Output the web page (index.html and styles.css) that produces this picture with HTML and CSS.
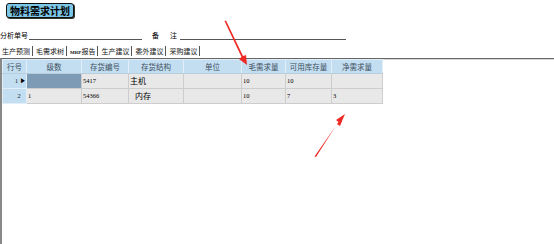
FILE: index.html
```html
<!DOCTYPE html>
<html lang="zh">
<head>
<meta charset="utf-8">
<link rel="stylesheet" href="styles.css">
</head>
<body>
<div class="page">
  <div class="title-row"><div class="title">物料需求计划</div></div>
  <div class="form-row">
    <span class="label">分析单号</span><span class="field f1"></span>
    <span class="label memo">备</span><span class="label memo2">注</span><span class="field f2"></span>
  </div>
  <div class="tabs">
    <span class="tab">生产预测</span><span class="tab">毛需求树</span><span class="tab active"><span class="mrp">MRP</span>报告</span><span class="tab">生产建议</span><span class="tab">委外建议</span><span class="tab">采购建议</span>
  </div>
  <div class="panel">
    <table class="grid">
      <colgroup>
        <col style="width:24px"><col style="width:55px"><col style="width:47px"><col style="width:55px"><col style="width:58px"><col style="width:44px"><col style="width:46px"><col style="width:51px">
      </colgroup>
      <thead>
        <tr><th>行号</th><th>级数</th><th>存货编号</th><th>存货结构</th><th>单位</th><th>毛需求量</th><th>可用库存量</th><th>净需求量</th></tr>
      </thead>
      <tbody>
        <tr><td class="rn">1 <span class="ptr">▶</span></td><td class="sel"></td><td class="num">5417</td><td class="name">主机</td><td></td><td class="num">10</td><td class="num">10</td><td></td></tr>
        <tr><td class="rn">2&nbsp;&nbsp;&nbsp;</td><td class="num">1</td><td class="num">54366</td><td class="name lvl2">内存</td><td></td><td class="num">10</td><td class="num">7</td><td class="num">3</td></tr>
      </tbody>
    </table>
  </div>
  <svg class="arrows" width="554" height="244" viewBox="0 0 554 244">
    <g fill="#ee2a24" stroke="none">
      <polygon points="224.5,21 226,20.5 243,56 246,55 247,65 239,59 241.5,57"/>
      <polygon points="314.5,156.5 316,157 337,124 340,126 345,114 336,120 338.5,122"/>
    </g>
  </svg>
</div>
</body>
</html>
```
FILE: styles.css
```css
html, body {
  margin: 0;
  padding: 0;
  background: #ffffff;
}
body {
  font-family: "Noto Sans CJK SC", "Noto Sans", sans-serif;
  color: #000;
  width: 554px;
  height: 244px;
  overflow: hidden;
  line-height: 1;
}
.page {
  position: relative;
  width: 554px;
  height: 244px;
}
.title-row {
  padding: 3px 0 0 6px;
  height: 16px;
  display: flex;
  align-items: flex-start;
}
.title {
  height: 13px;
  padding: 0 3px;
  background: #7cc6e6;
  border: 1px solid #111;
  border-radius: 3px;
  box-shadow: 1px 1px 0 #333;
  font-size: 10px;
  font-weight: bold;
  line-height: 13px;
}
.form-row {
  display: flex;
  align-items: flex-end;
  height: 21px;
  font-size: 7px;
  line-height: 8px;
}
.label {
  white-space: nowrap;
  padding-bottom: 1px;
}
.memo {
  margin-left: 10px;
  width: 18px;
}
.memo2 {
  width: 10px;
}
.field {
  display: block;
  border-bottom: 1px solid #555;
  height: 8px;
}
.f1 {
  width: 113px;
  margin-left: 1px;
}
.f2 {
  width: 166px;
}
.tabs {
  display: flex;
  margin-top: 6px;
  height: 10px;
  padding-left: 2px;
}
.tab {
  font-size: 7px;
  line-height: 10px;
  padding: 0 2px 0 0;
  border-right: 1px solid #555;
  margin-right: 3px;
  color: #111;
  white-space: nowrap;
}
.tab.active {
  background: #fff;
}
.mrp {
  font-family: "Liberation Serif", serif;
  font-size: 5px;
  font-weight: bold;
}
.panel {
  margin-top: 2px;
  height: 186px;
  border-top: 1px solid #666;
  border-left: 2px solid #888;
  box-shadow: inset 0 1px 0 #d8d8d8;
}
.grid {
  border-collapse: collapse;
  table-layout: fixed;
  width: 380px;
}
.grid th {
  height: 13px;
  background: #c3def1;
  border: 1px solid #e2eef8;
  border-bottom: 1px solid #b8cedd;
  font-size: 7.5px;
  font-weight: normal;
  color: #3f4f5e;
  padding: 0;
  line-height: 13px;
  text-align: center;
}
.grid td {
  height: 14px;
  background: #e8e8e8;
  border: 1px solid #cdcdcd;
  padding: 0 0 0 1px;
  font-size: 6.5px;
  font-family: "Liberation Serif", serif;
  color: #000;
  line-height: 14px;
  white-space: nowrap;
  overflow: hidden;
}
.grid td.rn {
  background: #c3def1;
  border-color: #e2eef8;
  text-align: right;
  padding-right: 0;
  font-size: 7px;
  color: #2a3440;
}
.ptr {
  font-size: 6px;
  color: #000;
}
.grid td.sel {
  background: #7e9bb6;
}
.grid td.name {
  font-family: "Noto Sans CJK SC", sans-serif;
  font-size: 8px;
}
.grid td.lvl2 {
  padding-left: 6px;
}
.arrows {
  position: absolute;
  left: 0;
  top: 0;
  pointer-events: none;
}
```
